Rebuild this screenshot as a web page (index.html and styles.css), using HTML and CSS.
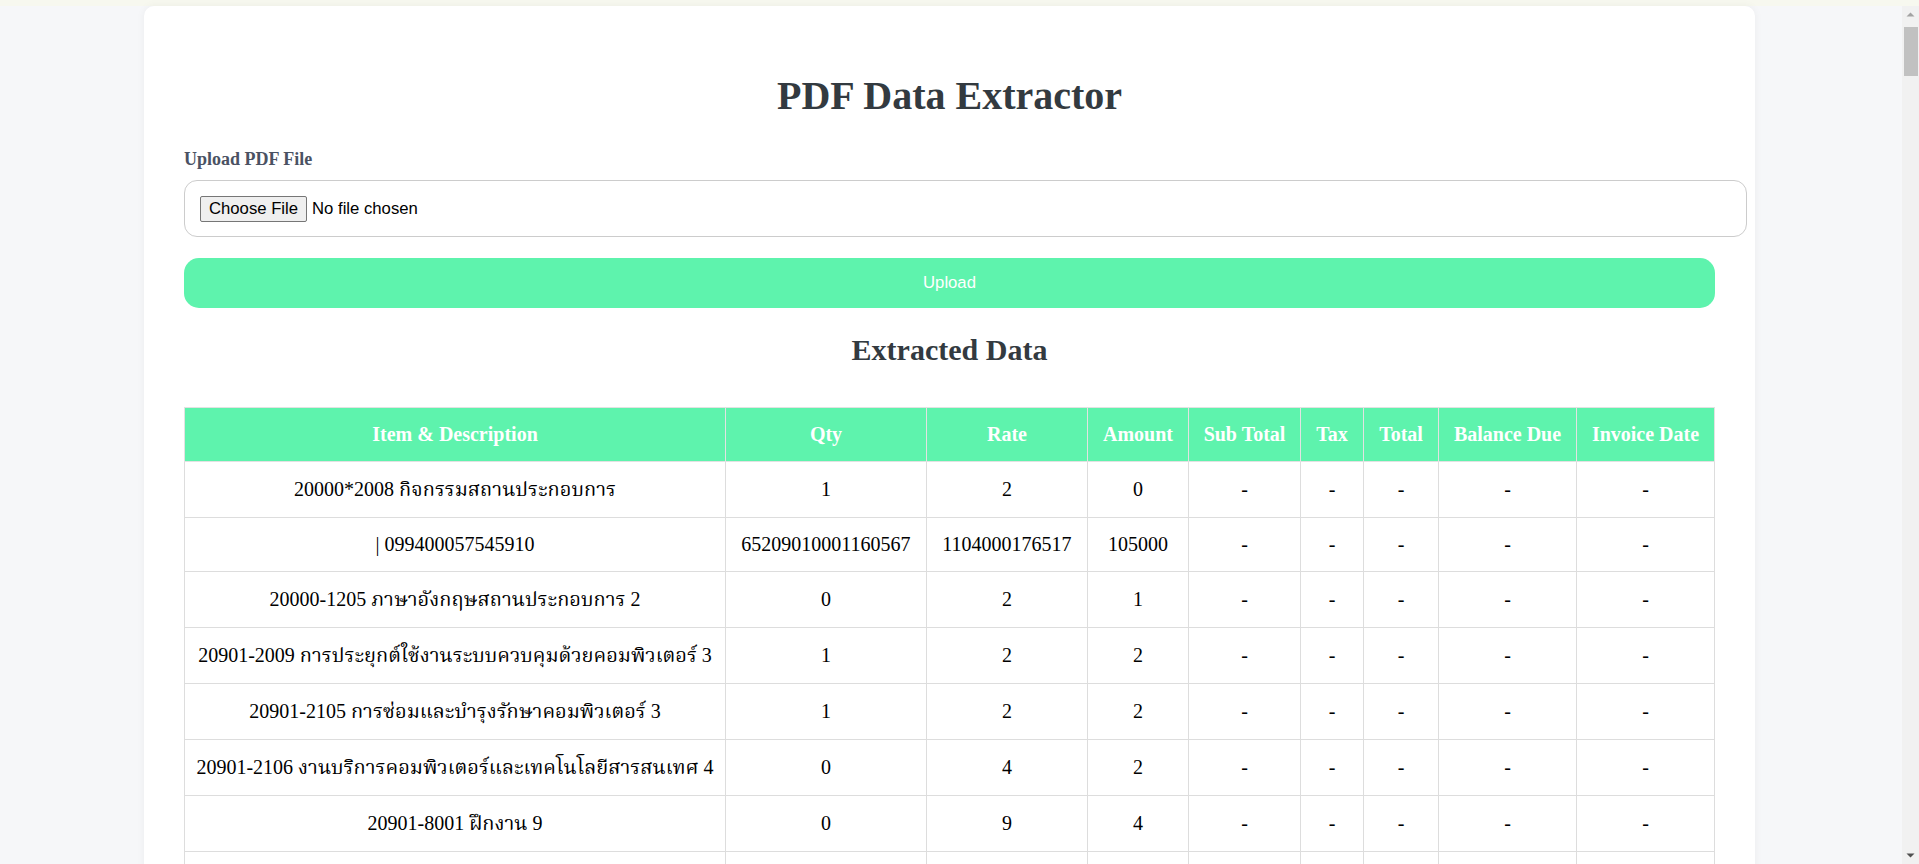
FILE: index.html
```html
<!DOCTYPE html>
<html lang="th">
<head>
<meta charset="utf-8">
<title>PDF Data Extractor</title>
<link rel="stylesheet" href="styles.css">
</head>
<body>
<div class="topstrip"></div>
<div class="viewport">
  <div class="page">
    <main class="card">
      <h1 class="title">PDF Data Extractor</h1>
      <form class="upload-form">
        <label class="field-label" for="pdf">Upload PDF File</label>
        <input class="file-input" id="pdf" type="file" accept="application/pdf">
        <button class="upload-btn" type="button">Upload</button>
      </form>
      <h2 class="section-title">Extracted Data</h2>
      <table class="data-table">
        <colgroup>
          <col class="c-item"><col class="c-qty"><col class="c-rate"><col class="c-amount"><col class="c-sub"><col class="c-tax"><col class="c-total"><col class="c-bal"><col class="c-date">
        </colgroup>
        <thead>
          <tr><th>Item &amp; Description</th><th>Qty</th><th>Rate</th><th>Amount</th><th>Sub Total</th><th>Tax</th><th>Total</th><th>Balance Due</th><th>Invoice Date</th></tr>
        </thead>
        <tbody>
          <tr><td>20000*2008 กิจกรรมสถานประกอบการ</td><td>1</td><td>2</td><td>0</td><td>-</td><td>-</td><td>-</td><td>-</td><td>-</td></tr>
          <tr class="latin"><td>| 099400057545910</td><td>65209010001160567</td><td>1104000176517</td><td>105000</td><td>-</td><td>-</td><td>-</td><td>-</td><td>-</td></tr>
          <tr><td>20000-1205 ภาษาอังกฤษสถานประกอบการ 2</td><td>0</td><td>2</td><td>1</td><td>-</td><td>-</td><td>-</td><td>-</td><td>-</td></tr>
          <tr><td>20901-2009 การประยุกต์ใช้งานระบบควบคุมด้วยคอมพิวเตอร์ 3</td><td>1</td><td>2</td><td>2</td><td>-</td><td>-</td><td>-</td><td>-</td><td>-</td></tr>
          <tr><td>20901-2105 การซ่อมและบำรุงรักษาคอมพิวเตอร์ 3</td><td>1</td><td>2</td><td>2</td><td>-</td><td>-</td><td>-</td><td>-</td><td>-</td></tr>
          <tr><td>20901-2106 งานบริการคอมพิวเตอร์และเทคโนโลยีสารสนเทศ 4</td><td>0</td><td>4</td><td>2</td><td>-</td><td>-</td><td>-</td><td>-</td><td>-</td></tr>
          <tr><td>20901-8001 ฝึกงาน 9</td><td>0</td><td>9</td><td>4</td><td>-</td><td>-</td><td>-</td><td>-</td><td>-</td></tr>
          <tr class="offscreen"><td>&nbsp;</td><td>&nbsp;</td><td>&nbsp;</td><td>&nbsp;</td><td>&nbsp;</td><td>&nbsp;</td><td>&nbsp;</td><td>&nbsp;</td><td>&nbsp;</td></tr>
        </tbody>
      </table>
    </main>
  </div>
  <div class="scrollbar" aria-hidden="true">
    <svg class="sb-arrow" width="17" height="17" viewBox="0 0 17 17"><path d="M4.5 10.5 L8.5 6.5 L12.5 10.5 Z" fill="#a3a3a3"/></svg>
    <div class="sb-track"><div class="sb-thumb"></div></div>
    <svg class="sb-arrow" width="17" height="17" viewBox="0 0 17 17"><path d="M4.5 6.5 L8.5 10.5 L12.5 6.5 Z" fill="#505050"/></svg>
  </div>
</div>
</body>
</html>
```
FILE: styles.css
```css
html, body {
  margin: 0;
  padding: 0;
}
body {
  background: #f6f7f9;
  font-family: "Liberation Serif", "Noto Serif Thai", "Noto Sans Thai", "Tlwg Typo", "DejaVu Serif", serif;
  color: #000;
  height: 864px;
  overflow: hidden;
}
.topstrip {
  height: 6px;
  background: #f7f8ef;
}
.viewport {
  display: flex;
  align-items: flex-start;
}
.page {
  flex: 1;
  min-width: 0;
  padding-right: 3px;
}
.scrollbar {
  width: 17px;
  height: 858px;
  flex: none;
  display: flex;
  flex-direction: column;
  background: #f1f1f1;
}
.sb-arrow {
  display: block;
  flex: none;
}
.sb-track {
  flex: 1;
  padding: 4px 1px 0 2px;
}
.sb-thumb {
  height: 49px;
  background: #c1c1c1;
}
.card {
  box-sizing: border-box;
  width: 1611px;
  margin: 0 auto 40px;
  padding: 40px;
  background: #fff;
  border-radius: 10px;
  box-shadow: 0 0 8px rgba(0, 0, 0, 0.05);
}
.title {
  margin: 27px 0 30px;
  font-size: 40px;
  line-height: 46px;
  font-weight: bold;
  text-align: center;
  color: #333a40;
}
.upload-form {
  display: flex;
  flex-direction: column;
}
.field-label {
  display: block;
  margin-bottom: 10px;
  font-size: 18px;
  line-height: 21px;
  font-weight: bold;
  color: #4a5263;
}
.file-input {
  box-sizing: border-box;
  width: calc(100% + 32px);
  height: 57px;
  padding: 15px;
  border: 1px solid #cccccc;
  border-radius: 13px;
  background: #fff;
  font-family: "Liberation Sans", Arial, sans-serif;
  font-size: 16.7px;
  color: #000;
}
.file-input::file-selector-button {
  font-family: "Liberation Sans", Arial, sans-serif;
  font-size: 16.7px;
  padding: 2px 8px;
  margin-right: 5px;
  border: 1px solid #767676;
  border-radius: 2px;
  background: #efefef;
  color: #000;
}
.upload-btn {
  margin-top: 21px;
  height: 50px;
  width: 100%;
  border: none;
  border-radius: 15px;
  background: #5ef3ad;
  color: #fff;
  font-family: "Liberation Sans", Arial, sans-serif;
  font-size: 16.7px;
}
.section-title {
  margin: 25px 0 40px;
  font-size: 30px;
  line-height: 34px;
  font-weight: bold;
  text-align: center;
  color: #333a40;
}
.data-table {
  width: 1530px;
  table-layout: fixed;
  border-collapse: collapse;
}
.c-item { width: 541px; }
.c-qty { width: 201px; }
.c-rate { width: 161px; }
.c-amount { width: 101px; }
.c-sub { width: 112px; }
.c-tax { width: 63px; }
.c-total { width: 75px; }
.c-bal { width: 138px; }
.c-date { width: 138px; }
.data-table th,
.data-table td {
  border: 1px solid #dddddd;
  padding: 15px 4px;
  text-align: center;
  font-size: 20px;
  white-space: nowrap;
}
.data-table th {
  background: #5ef3ad;
  color: #fff;
  font-weight: bold;
  line-height: 23px;
  border-color: #e2e2e2;
}
.data-table td {
  line-height: 25px;
  color: #000;
}
.data-table tr.latin td {
  line-height: 23.4px;
}
```
